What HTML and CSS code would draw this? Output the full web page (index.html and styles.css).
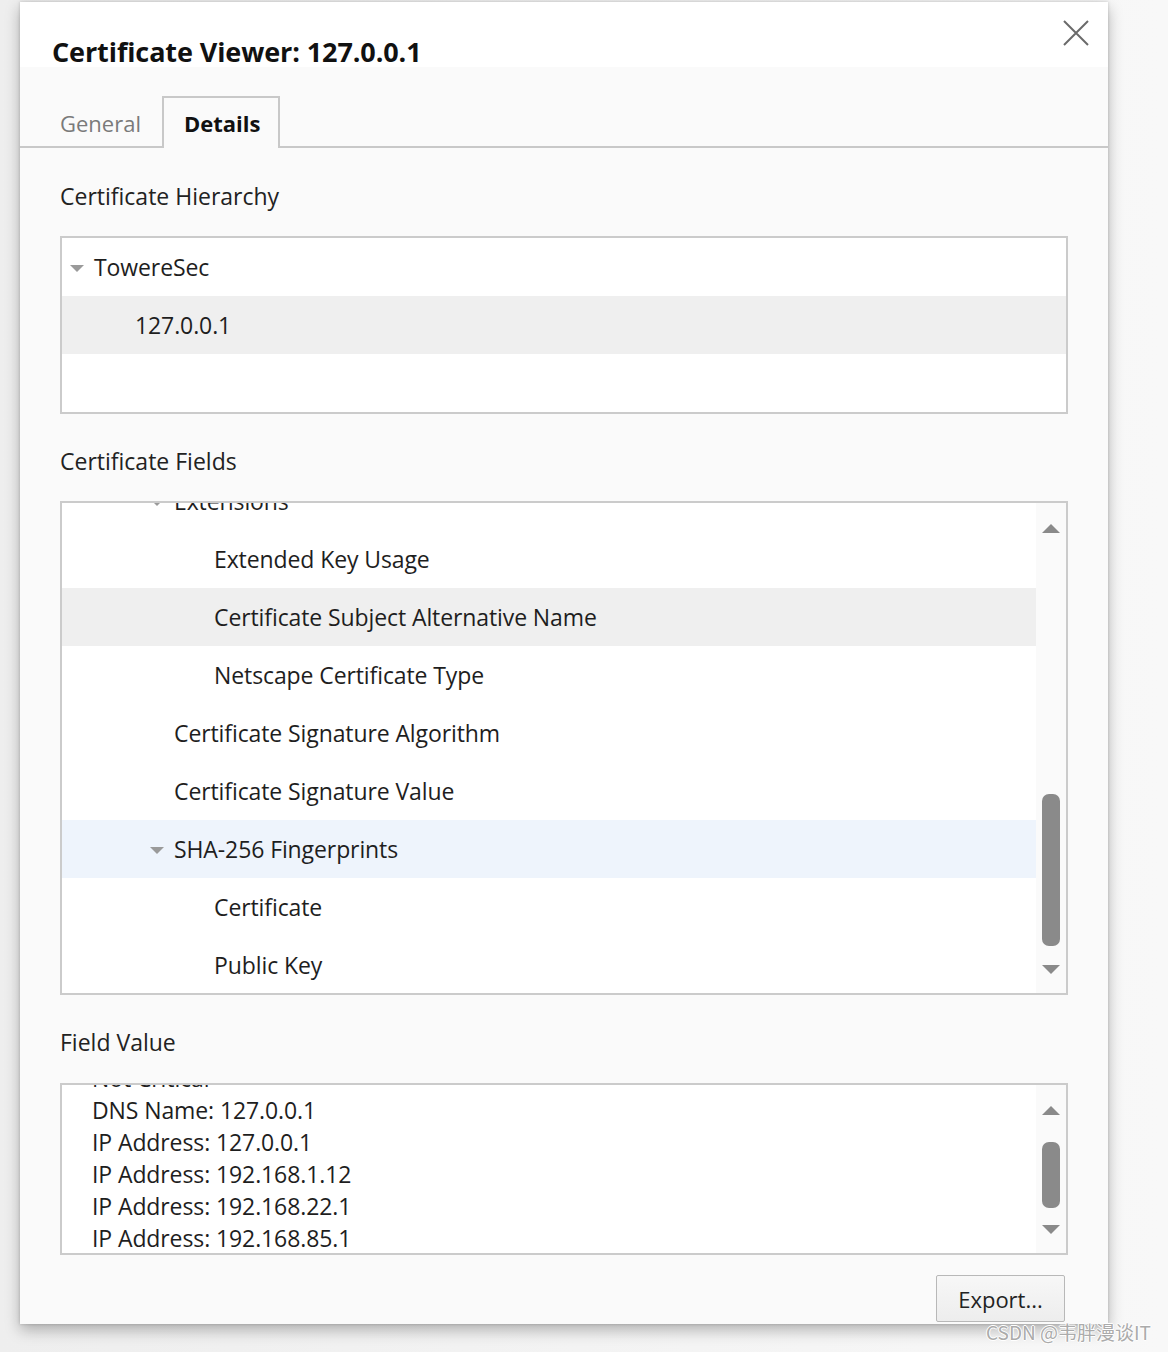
FILE: index.html
```html
<!DOCTYPE html>
<html>
<head>
<meta charset="utf-8">
<link rel="stylesheet" href="styles.css">
</head>
<body>
<div class="stage">
  <div class="dialog">
    <div class="header">
      <h1 class="title">Certificate Viewer: 127.0.0.1</h1>
      <svg class="close" width="26" height="26" viewBox="0 0 26 26"><path d="M1 1 L25 25 M25 1 L1 25" stroke="#6a6a6a" stroke-width="2" fill="none"/></svg>
    </div>
    <div class="tabs">
      <div class="tab first">General</div>
      <div class="tab active">Details</div>
    </div>
    <div class="content">
      <div class="label">Certificate Hierarchy</div>
      <div class="box hier">
        <div class="row lv0"><span class="tri"></span>TowereSec</div>
        <div class="row lv1 sel">127.0.0.1</div>
      </div>

      <div class="label">Certificate Fields</div>
      <div class="box fields">
        <div class="list">
          <div class="list-inner">
            <div class="row lv2"><span class="tri"></span>Extensions</div>
            <div class="row lv3">Extended Key Usage</div>
            <div class="row lv3 sel">Certificate Subject Alternative Name</div>
            <div class="row lv3">Netscape Certificate Type</div>
            <div class="row lv2">Certificate Signature Algorithm</div>
            <div class="row lv2">Certificate Signature Value</div>
            <div class="row lv2 hover"><span class="tri"></span>SHA-256 Fingerprints</div>
            <div class="row lv3">Certificate</div>
            <div class="row lv3">Public Key</div>
          </div>
        </div>
        <div class="scrollbar sb-fields">
          <span class="arrow up"></span>
          <span class="track"><span class="thumb"></span></span>
          <span class="arrow down"></span>
        </div>
      </div>

      <div class="label">Field Value</div>
      <div class="box value">
        <div class="text">
          <div class="text-inner">
            <div class="line">Not Critical</div>
            <div class="line">DNS Name: 127.0.0.1</div>
            <div class="line">IP Address: 127.0.0.1</div>
            <div class="line">IP Address: 192.168.1.12</div>
            <div class="line">IP Address: 192.168.22.1</div>
            <div class="line">IP Address: 192.168.85.1</div>
          </div>
        </div>
        <div class="scrollbar sb-value">
          <span class="arrow up"></span>
          <span class="track"><span class="thumb"></span></span>
          <span class="arrow down"></span>
        </div>
      </div>

      <div class="actions">
        <button class="btn">Export...</button>
      </div>
    </div>
  </div>
  <div class="watermark">CSDN @韦胖漫谈IT</div>
</div>
</body>
</html>
```

FILE: styles.css
```css
html, body {
  margin: 0;
  padding: 0;
}
body {
  width: 1168px;
  height: 1352px;
  overflow: hidden;
  background: linear-gradient(to right, #eeeeee 0px, #f8f8f8 1160px);
  font-family: "Open Sans", "Noto Sans", "Noto Sans CJK SC", sans-serif;
  color: #1e1e1e;
}
.stage {
  position: relative;
  width: 1168px;
  height: 1352px;
  padding: 2px 0 0 20px;
  box-sizing: border-box;
}
.dialog {
  width: 1088px;
  height: 1322px;
  background: #fafafa;
  box-shadow: 0 6px 14px rgba(0,0,0,0.28), 0 0 3px rgba(0,0,0,0.18);
  display: flex;
  flex-direction: column;
}
.header {
  height: 65px;
  background: #ffffff;
  display: flex;
  justify-content: space-between;
  align-items: flex-start;
  box-sizing: border-box;
  padding: 0 19px 0 32px;
}
.title {
  margin: 0;
  padding-top: 32px;
  font-size: 27px;
  line-height: 36px;
  font-weight: 700;
  color: #111;
  letter-spacing: -0.1px;
}
.close {
  margin-top: 18px;
}
.tabs {
  display: flex;
  margin-top: 29px;
  padding-left: 20px;
  height: 52px;
  box-sizing: border-box;
  border-bottom: 2px solid #c8c8c8;
}
.tab {
  height: 52px;
  box-sizing: border-box;
  padding: 1px 18px 0 18px;
  font-size: 22px;
  line-height: 48px;
  color: #7a7a7a;
  border: 2px solid transparent;
  border-bottom: 0;
}
.tab.first {
  padding-right: 20px;
  margin-right: -1px;
}
.tab.active {
  padding-left: 20px;
  color: #111;
  font-weight: 700;
  border-color: #c8c8c8;
  background: #fafafa;
  height: 52px;
  margin-bottom: -2px;
}
.content {
  padding: 32px 40px 0 40px;
  display: flex;
  flex-direction: column;
}
.label {
  font-size: 23px;
  line-height: 32px;
  color: #222;
}
.box {
  margin-top: 24px;
  border: 2px solid #cbcbcb;
  background: #fff;
  box-sizing: border-box;
  display: flex;
}
.hier {
  height: 178px;
  flex-direction: column;
  margin-bottom: 31px;
}
.row {
  height: 58px;
  line-height: 58px;
  font-size: 23px;
  letter-spacing: -0.1px;
  white-space: nowrap;
  position: relative;
  color: #1e1e1e;
}
.row.sel { background: #efefef; }
.row.hover { background: #eef4fc; }
.lv0 { padding-left: 32px; }
.lv1 { padding-left: 73px; }
.lv2 { padding-left: 112px; }
.lv3 { padding-left: 152px; }
.tri {
  position: absolute;
  top: 27px;
  margin-left: -24px;
  width: 0;
  height: 0;
  border-left: 7px solid transparent;
  border-right: 7px solid transparent;
  border-top: 7px solid #9a9a9a;
}
.fields {
  margin-top: 24px;
  height: 494px;
  margin-bottom: 31px;
}
.list, .text {
  flex: 1;
  overflow: hidden;
}
.list-inner { margin-top: -31px; }
.scrollbar {
  width: 30px;
  background: #fafafa;
  display: flex;
  flex-direction: column;
  align-items: center;
  box-sizing: border-box;
}
.arrow {
  width: 0;
  height: 0;
  border-left: 9px solid transparent;
  border-right: 9px solid transparent;
}
.arrow.up { border-bottom: 9px solid #8a8a8a; }
.arrow.down { border-top: 9px solid #8a8a8a; }
.track {
  flex: 1;
  width: 18px;
  display: flex;
  flex-direction: column;
}
.thumb {
  width: 18px;
  background: #8a8a8a;
  border-radius: 7px;
}
.sb-fields { padding: 21px 0 19px; }
.sb-fields .track { padding-top: 261px; }
.sb-fields .thumb { height: 152px; }
.value {
  margin-top: 25px;
  height: 172px;
}
.text-inner {
  margin-top: -23px;
  padding-left: 30px;
}
.line {
  font-size: 23px;
  line-height: 32px;
  letter-spacing: -0.1px;
  color: #1e1e1e;
  white-space: nowrap;
}
.sb-value { padding: 21px 0 19px; }
.sb-value .track { padding-top: 27px; }
.sb-value .thumb { height: 66px; }
.actions {
  display: flex;
  justify-content: flex-end;
  margin-top: 20px;
  padding-right: 3px;
}
.btn {
  width: 129px;
  height: 47px;
  box-sizing: border-box;
  border: 1px solid #b8b8b8;
  border-radius: 2px;
  background: linear-gradient(#f7f7f7, #ededed);
  font-family: "Open Sans", "Noto Sans", sans-serif;
  font-size: 22px;
  color: #222;
  padding: 0;
}
.watermark {
  position: absolute;
  left: 986px;
  top: 1319px;
  font-family: "Noto Sans CJK SC", "Noto Sans", sans-serif;
  font-size: 19px;
  line-height: 26px;
  color: #ababab;
  text-shadow: 1px 0 0 #fff, -1px 0 0 #fff, 0 1px 0 #fff, 0 -1px 0 #fff;
}
```
